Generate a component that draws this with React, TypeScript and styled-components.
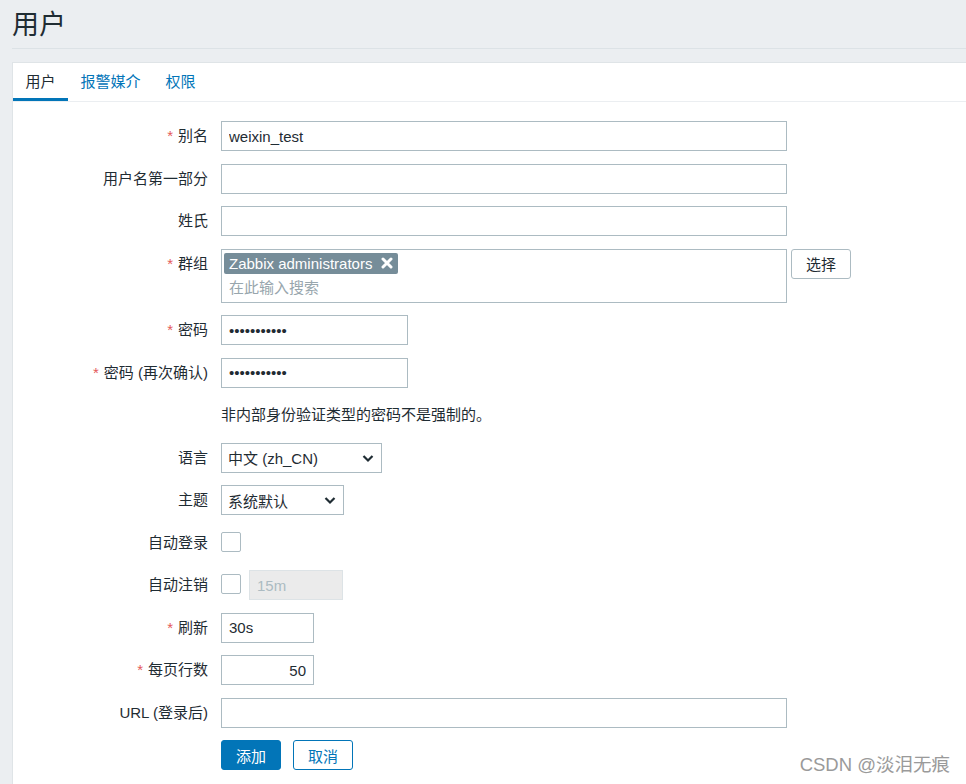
import React from "react";
import styled, { createGlobalStyle } from "styled-components";

const GlobalStyle = createGlobalStyle`
  html, body {
    margin: 0;
    padding: 0;
    background: #ebeef1;
    overflow: hidden;
  }
  body {
    font-family: "Liberation Sans", "Noto Sans CJK SC", Arial, sans-serif;
    color: #1f2c33;
  }
`;

const Page = styled.div`
  position: relative;
  padding-left: 12px;
  height: 784px;
  overflow: hidden;
`;

const Header = styled.div`
  height: 48px;
  display: flex;
  align-items: center;
  border-bottom: 1px solid #dce2e6;
`;

const Title = styled.h1`
  margin: 0;
  font-size: 27px;
  font-weight: 400;
  color: #1f2c33;
  line-height: 1;
  padding-top: 2px;
`;

const Panel = styled.div`
  margin-top: 13px;
  background: #fff;
  border: 1px solid #dfe4e7;
  border-right: none;
  min-height: 800px;
`;

const Tabs = styled.div`
  display: flex;
  height: 38px;
  border-bottom: 1px solid #ebeef1;
`;

const Tab = styled.div<{ $active?: boolean }>`
  padding: 0 12.5px;
  font-size: 15px;
  display: flex;
  align-items: center;
  color: ${(p) => (p.$active ? "#1f2c33" : "#0275b8")};
  border-bottom: 3px solid ${(p) => (p.$active ? "#0275b8" : "transparent")};
`;

const Form = styled.div`
  display: grid;
  grid-template-columns: 195px 1fr;
  column-gap: 13px;
  row-gap: 12.5px;
  padding-top: 19px;
  font-size: 15px;
`;

const Label = styled.div`
  text-align: right;
  line-height: 30px;
  white-space: nowrap;
`;

const Star = styled.span`
  color: #e45959;
  margin-right: 5px;
`;

const Control = styled.div`
  display: flex;
  align-items: flex-start;
  gap: 4px;
  min-height: 30px;
`;

const TextInput = styled.input<{ $w: number; $right?: boolean }>`
  box-sizing: border-box;
  width: ${(p) => p.$w}px;
  height: 30px;
  border: 1px solid #acbbc2;
  border-radius: 0;
  padding: 0 7px;
  font: inherit;
  font-size: 15px;
  color: #1f2c33;
  background: #fff;
  outline: none;
  text-align: ${(p) => (p.$right ? "right" : "left")};
  &:disabled {
    background: #ebebeb;
    border-color: #dde3e6;
    color: #acbbc2;
  }
`;

const MultiSelect = styled.div`
  box-sizing: border-box;
  width: 566px;
  height: 54px;
  border: 1px solid #acbbc2;
  padding: 3px 2px;
`;

const Tag = styled.span`
  display: inline-flex;
  align-items: center;
  height: 21px;
  background: #768d99;
  color: #fff;
  border-radius: 2px;
  padding: 0 5px 0 5px;
  font-size: 15px;
  gap: 9px;
`;

const Placeholder = styled.div`
  color: #98a6ad;
  padding-left: 5px;
  margin-top: 3px;
  line-height: 22px;
`;

const PlainButton = styled.button`
  box-sizing: border-box;
  width: 60px;
  height: 30px;
  border: 1px solid #acbbc2;
  border-radius: 3px;
  background: #fff;
  color: #1f2c33;
  font: inherit;
  font-size: 15px;
  padding: 0;
`;

const Note = styled.div`
  line-height: 30px;
`;

const SelectBox = styled.div<{ $w: number }>`
  box-sizing: border-box;
  width: ${(p) => p.$w}px;
  height: 30px;
  border: 1px solid #acbbc2;
  display: flex;
  align-items: center;
  justify-content: space-between;
  padding: 0 6px 0 6px;
  background: #fff;
`;

const Check = styled.span`
  box-sizing: border-box;
  display: inline-block;
  width: 20px;
  height: 20px;
  border: 1px solid #acbbc2;
  border-radius: 2px;
  background: #fff;
  margin-top: 4px;
`;

const CheckGroup = styled.div`
  display: flex;
  align-items: flex-start;
  gap: 8px;
`;

const Buttons = styled.div`
  display: flex;
  gap: 12px;
`;

const Btn = styled.button<{ $primary?: boolean }>`
  box-sizing: border-box;
  width: 60px;
  height: 30px;
  border-radius: 3px;
  border: 1px solid #0275b8;
  background: ${(p) => (p.$primary ? "#0275b8" : "#fff")};
  color: ${(p) => (p.$primary ? "#fff" : "#0275b8")};
  font: inherit;
  font-size: 15px;
  padding: 0;
`;

const Watermark = styled.div`
  position: absolute;
  right: 16px;
  bottom: 8px;
  font-size: 18.5px;
  color: #9a9a9a;
  font-family: "Liberation Sans", "Noto Sans CJK SC", sans-serif;
`;

const Chevron = () => (
  <svg width="14" height="14" viewBox="0 0 14 14">
    <path d="M2.5 5 L7 9.5 L11.5 5" fill="none" stroke="#1f2c33" strokeWidth="2.2" />
  </svg>
);

const Cross = () => (
  <svg width="12" height="12" viewBox="0 0 12 12">
    <path d="M2 2 L10 10 M10 2 L2 10" stroke="#fff" strokeWidth="3" strokeLinecap="round" />
  </svg>
);

const Row: React.FC<{ label: string; req?: boolean; children: React.ReactNode }> = ({
  label,
  req,
  children,
}) => (
  <>
    <Label>
      {req && <Star>*</Star>}
      {label}
    </Label>
    <Control>{children}</Control>
  </>
);

const App: React.FC = () => {
  return (
    <Page>
      <GlobalStyle />
      <Header>
        <Title>用户</Title>
      </Header>
      <Panel>
        <Tabs>
          <Tab $active>用户</Tab>
          <Tab>报警媒介</Tab>
          <Tab>权限</Tab>
        </Tabs>
        <Form>
          <Row label="别名" req>
            <TextInput $w={566} defaultValue="weixin_test" readOnly />
          </Row>
          <Row label="用户名第一部分">
            <TextInput $w={566} readOnly />
          </Row>
          <Row label="姓氏">
            <TextInput $w={566} readOnly />
          </Row>
          <Row label="群组" req>
            <MultiSelect>
              <Tag>
                Zabbix administrators
                <Cross />
              </Tag>
              <Placeholder>在此输入搜索</Placeholder>
            </MultiSelect>
            <PlainButton>选择</PlainButton>
          </Row>
          <Row label="密码" req>
            <TextInput $w={187} type="password" defaultValue="abcdefghijk" readOnly />
          </Row>
          <Row label="密码 (再次确认)" req>
            <TextInput $w={187} type="password" defaultValue="abcdefghijk" readOnly />
          </Row>
          <div />
          <Note>非内部身份验证类型的密码不是强制的。</Note>
          <Row label="语言">
            <SelectBox $w={161}>
              <span>中文 (zh_CN)</span>
              <Chevron />
            </SelectBox>
          </Row>
          <Row label="主题">
            <SelectBox $w={123}>
              <span>系统默认</span>
              <Chevron />
            </SelectBox>
          </Row>
          <Row label="自动登录">
            <Check />
          </Row>
          <Row label="自动注销">
            <CheckGroup>
              <Check />
              <TextInput $w={94} defaultValue="15m" disabled />
            </CheckGroup>
          </Row>
          <Row label="刷新" req>
            <TextInput $w={93} defaultValue="30s" readOnly />
          </Row>
          <Row label="每页行数" req>
            <TextInput $w={93} defaultValue="50" $right readOnly />
          </Row>
          <Row label="URL (登录后)">
            <TextInput $w={566} readOnly />
          </Row>
          <div />
          <Buttons>
            <Btn $primary>添加</Btn>
            <Btn>取消</Btn>
          </Buttons>
        </Form>
      </Panel>
      <Watermark>CSDN @淡泪无痕</Watermark>
    </Page>
  );
};

export default App;
